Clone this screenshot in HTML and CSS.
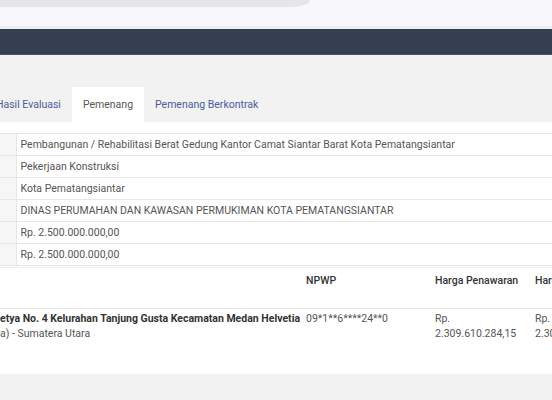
FILE: index.html
```html
<!DOCTYPE html>
<html>
<head>
<meta charset="utf-8">
<link rel="stylesheet" href="styles.css">
</head>
<body>
<header class="top">
  <div class="search"></div>
</header>
<nav class="navbar"></nav>
<main class="content">
  <ul class="tabs">
    <li class="tab">Hasil Evaluasi</li>
    <li class="tab active">Pemenang</li>
    <li class="tab">Pemenang Berkontrak</li>
  </ul>
  <section class="panel">
    <table class="info">
      <tr><th></th><td>Pembangunan / Rehabilitasi Berat Gedung Kantor Camat Siantar Barat Kota Pematangsiantar</td></tr>
      <tr><th></th><td>Pekerjaan Konstruksi</td></tr>
      <tr><th></th><td>Kota Pematangsiantar</td></tr>
      <tr><th></th><td>DINAS PERUMAHAN DAN KAWASAN PERMUKIMAN KOTA PEMATANGSIANTAR</td></tr>
      <tr><th></th><td>Rp. 2.500.000.000,00</td></tr>
      <tr><th></th><td>Rp. 2.500.000.000,00</td></tr>
    </table>
    <table class="winners">
      <tr class="head">
        <th class="c1"></th>
        <th class="c2">NPWP</th>
        <th class="c3">Harga Penawaran</th>
        <th class="c4">Harga Terkoreksi</th>
      </tr>
      <tr class="row">
        <td class="c1"><b>etya No. 4 Kelurahan Tanjung Gusta Kecamatan Medan Helvetia</b><br>a) - Sumatera Utara</td>
        <td class="c2">09*1**6****24**0</td>
        <td class="c3">Rp.<br>2.309.610.284,15</td>
        <td class="c4">Rp.<br>2.309.610.284,15</td>
      </tr>
    </table>
  </section>
</main>
</body>
</html>
```

FILE: styles.css
```css
* { box-sizing: border-box; }
html, body { margin: 0; padding: 0; }
body {
  width: 552px;
  height: 400px;
  overflow: hidden;
  background: #f2f2f2;
  font-family: Roboto, "Liberation Sans", sans-serif;
  font-size: 10.5px;
  color: #555;
}
.top {
  height: 29px;
  background: #f8f8fc;
  border-bottom: 3px solid #eeeef3;
}
.search {
  width: 310px;
  height: 7px;
  background: #e5e5ea;
  border-bottom-right-radius: 18px 7px;
}
.navbar {
  height: 26px;
  background: #353f51;
  border-bottom: 1px solid #4a5466;
}
.content {
  padding-top: 32px;
}
.tabs {
  list-style: none;
  margin: 0 0 0 -15px;
  padding: 0;
  display: flex;
  height: 35px;
}
.tab {
  padding: 0 11px;
  line-height: 35px;
  color: #4a5d9c;
  white-space: nowrap;
}
.tab.active {
  background: #fff;
  color: #555;
}
.panel {
  background: #fff;
  padding-top: 11px;
  height: 252px;
  overflow: hidden;
  white-space: nowrap;
}
.info {
  border-collapse: collapse;
  width: 600px;
}
.info th {
  width: 16px;
  background: #f6f6f6;
  border: 1px solid #e6e6e6;
  border-left: 0;
  padding: 0;
}
.info td {
  height: 22px;
  padding: 0 4px;
  border: 1px solid #e6e6e6;
  color: #555;
}
.winners {
  border-collapse: collapse;
  table-layout: fixed;
  width: 620px;
  margin-top: 1px;
}
.winners th, .winners td {
  text-align: left;
  vertical-align: top;
  padding: 0 4px;
  line-height: 15px;
  overflow: hidden;
}
.winners th {
  color: #333;
  font-weight: 500;
  padding-top: 5px;
  height: 41px;
  border-bottom: 1px solid #e6e6e6;
  border-top: 1px solid #eee;
}
.winners td {
  padding-top: 2px;
  color: #555;
}
.winners b { color: #333; font-weight: 700; }
.winners .c1 { width: 302px; padding-left: 0; }
.winners .c2 { width: 129px; }
.winners .c3 { width: 100px; }
.winners .c4 { width: 89px; }
```
